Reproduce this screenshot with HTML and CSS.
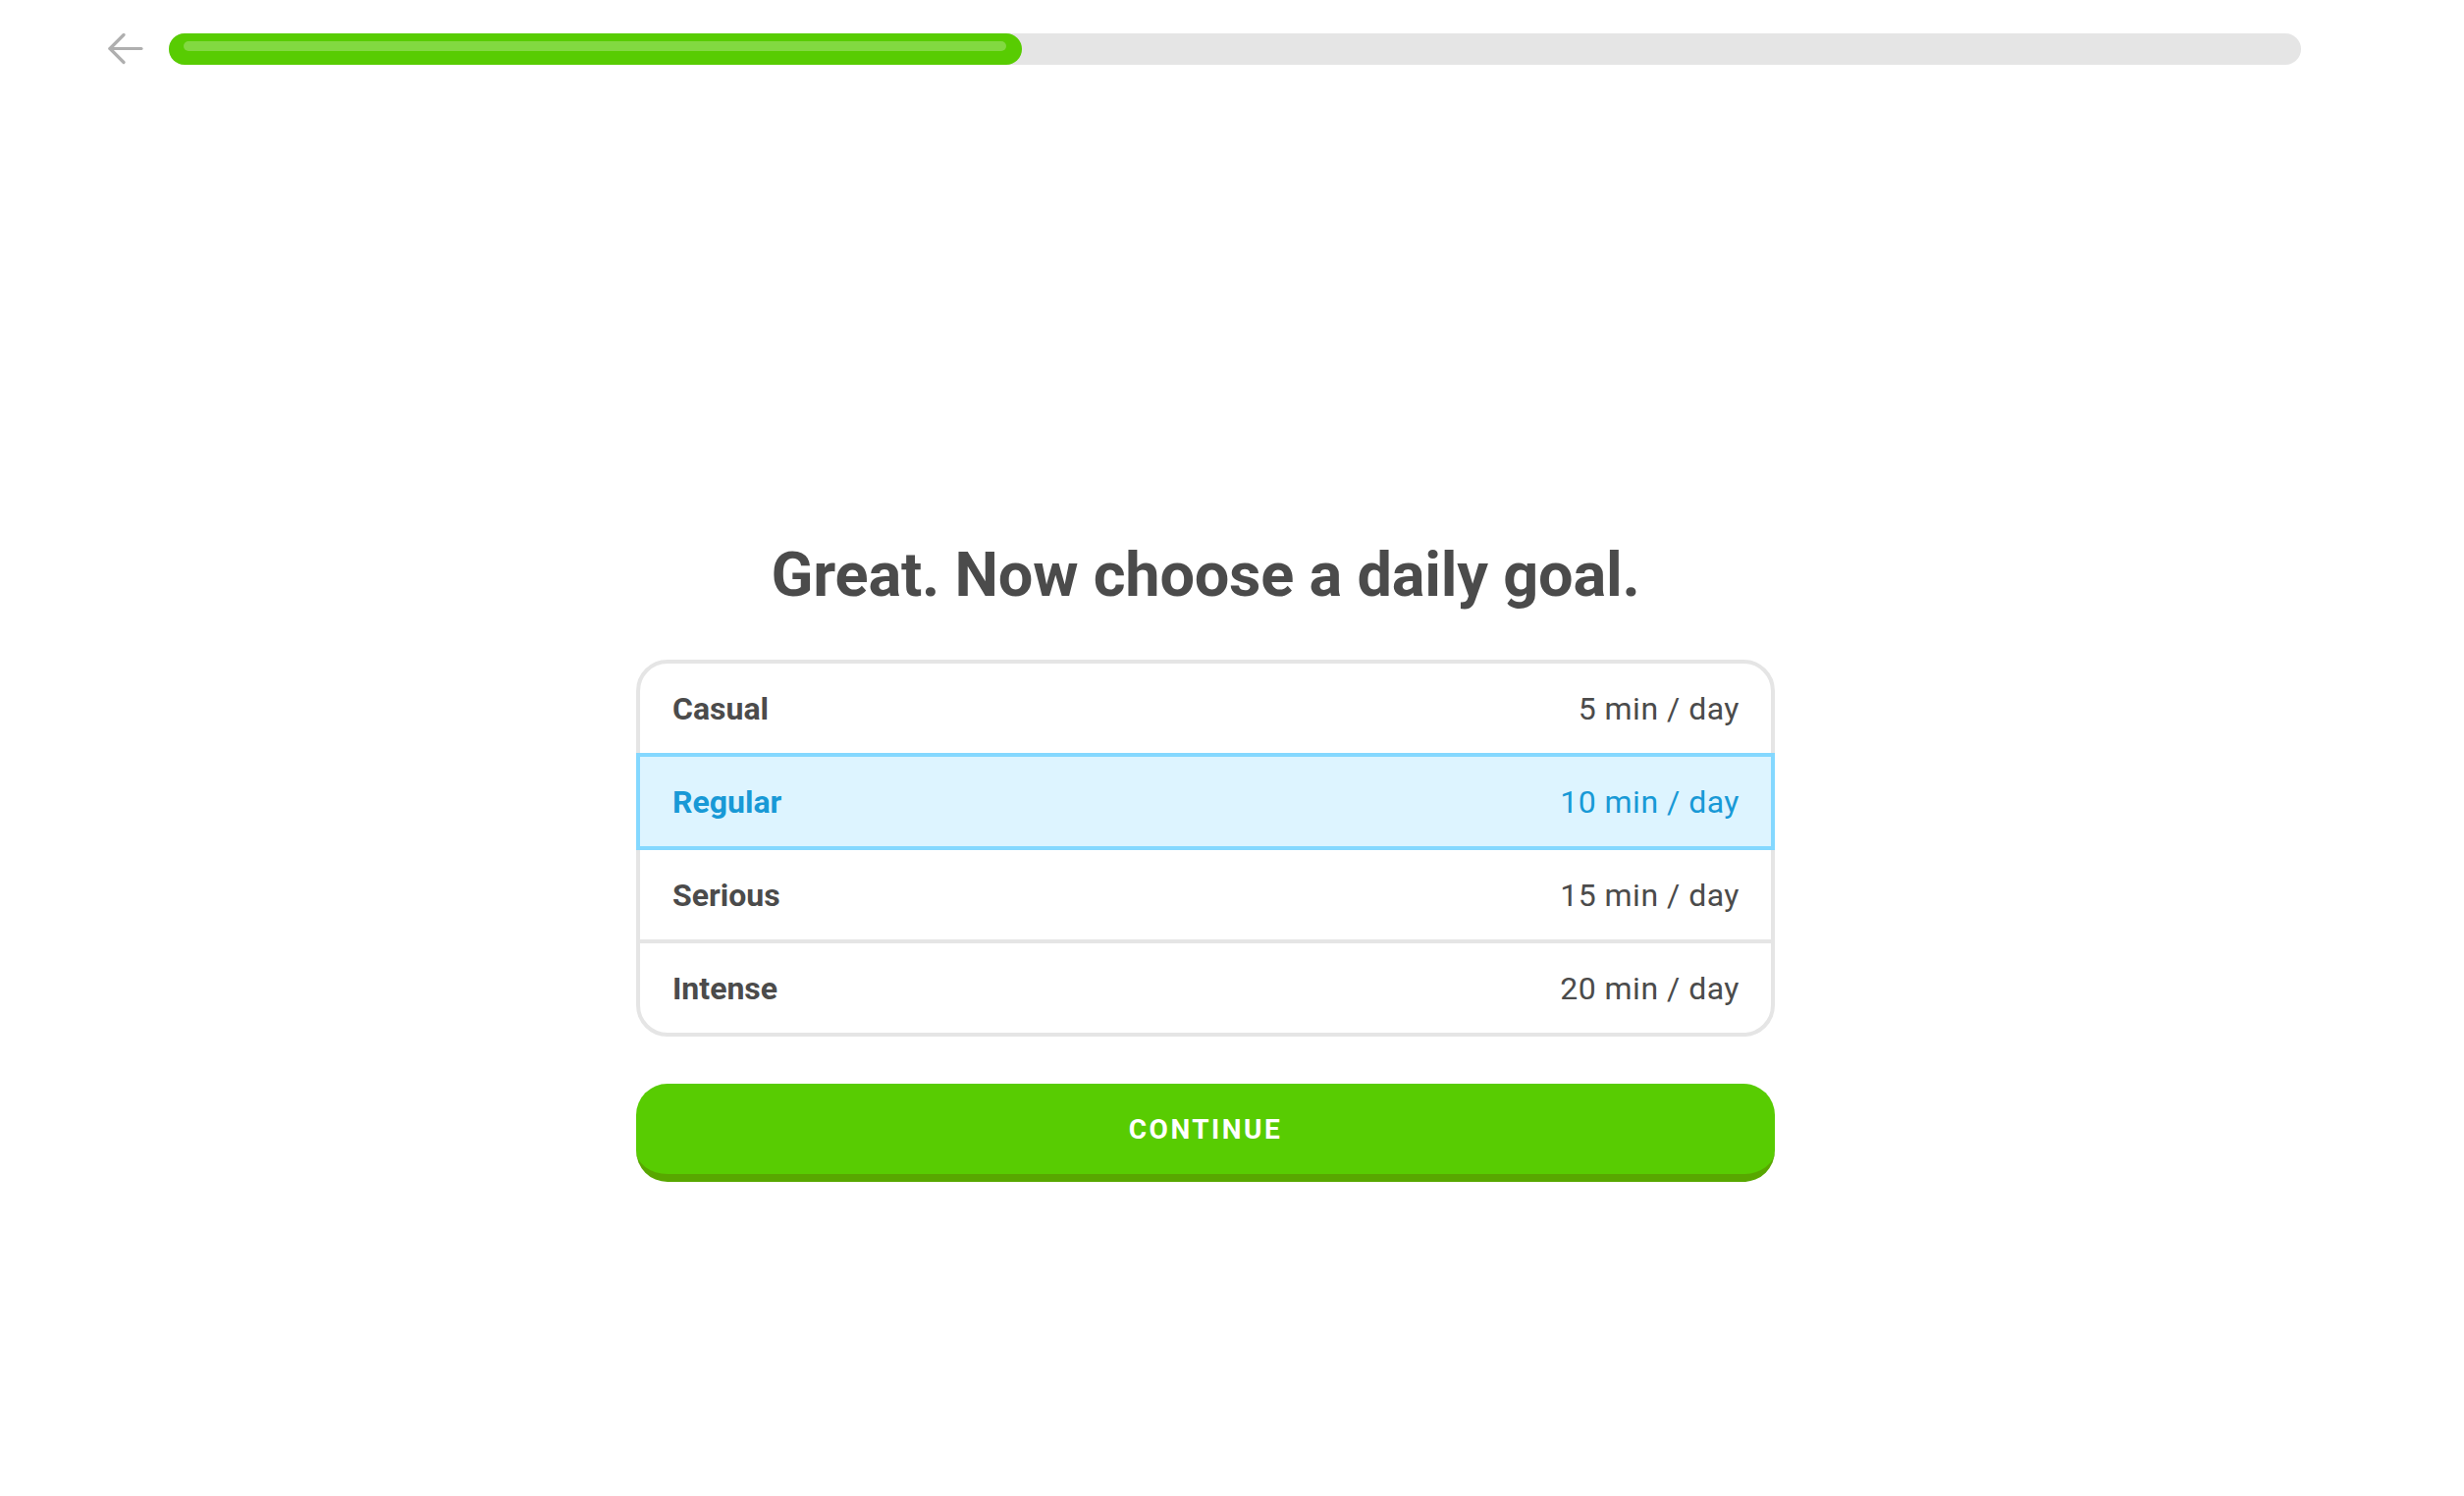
FILE: index.html
```html
<!DOCTYPE html>
<html lang="en">

<head>
    <meta charset="UTF-8">
    <meta name="viewport" content="width=device-width, initial-scale=1.0">
    <title>Daily Goal</title>
    <link rel="stylesheet" href="styles.css">
</head>

<body>
    <div class="topbar">
        <button class="back" aria-label="Back">
            <svg width="36" height="32" viewBox="0 0 36 32" fill="none" stroke="#afafaf" stroke-width="3.2" stroke-linecap="round" stroke-linejoin="round">
                <path d="M2 15.5H34" />
                <path d="M16 1.5L2 15.5L16 29.5" />
            </svg>
        </button>
        <div class="progress">
            <div class="progress-fill">
                <div class="progress-shine"></div>
            </div>
        </div>
    </div>

    <div class="main">
        <div class="goal">
            <h1>Great. Now choose a daily goal.</h1>

            <div class="goal-list">
                <div class="goal-option">
                    <span class="goal-name">Casual</span>
                    <span class="goal-time">5 min / day</span>
                </div>
                <div class="goal-option selected">
                    <span class="goal-name">Regular</span>
                    <span class="goal-time">10 min / day</span>
                </div>
                <div class="goal-option">
                    <span class="goal-name">Serious</span>
                    <span class="goal-time">15 min / day</span>
                </div>
                <div class="goal-option">
                    <span class="goal-name">Intense</span>
                    <span class="goal-time">20 min / day</span>
                </div>
            </div>

            <button class="continue">Continue</button>
        </div>
    </div>
</body>

</html>
```

FILE: styles.css
```css
body {
    font-family: Roboto, "Noto Sans", sans-serif;
    margin: 0;
    background-color: #fff;
    color: #4b4b4b;
}

.topbar {
    display: flex;
    align-items: center;
    gap: 26px;
    padding: 34px 166px 0 110px;
}

.back {
    display: flex;
    padding: 0;
    border: none;
    background: none;
    cursor: pointer;
}

.progress {
    flex: 1;
    height: 32px;
    background-color: #e5e5e5;
    border-radius: 16px;
}

.progress-fill {
    width: 40%;
    height: 100%;
    padding: 8px 16px 0 15px;
    box-sizing: border-box;
    background-color: #58cc02;
    border-radius: 16px;
}

.progress-shine {
    height: 10px;
    border-radius: 5px;
    background-color: rgba(255, 255, 255, 0.25);
}

.main {
    display: flex;
    justify-content: center;
    padding-right: 54px;
    margin-top: 482px;
}

.goal {
    width: 1160px;
}

h1 {
    text-align: center;
    font-size: 63px;
    line-height: 76px;
    font-weight: 700;
    letter-spacing: -0.2px;
    margin: 0 0 48px;
}

.goal-list {
    display: flex;
    flex-direction: column;
}

.goal-option {
    display: flex;
    justify-content: space-between;
    align-items: center;
    height: 99px;
    box-sizing: border-box;
    padding: 0 32px 0 33px;
    margin-top: -4px;
    border: 4px solid #e5e5e5;
    font-size: 32px;
    cursor: pointer;
}

.goal-option:first-child {
    margin-top: 0;
    border-radius: 32px 32px 0 0;
}

.goal-option:last-child {
    border-radius: 0 0 32px 32px;
}

.goal-option.selected {
    position: relative;
    z-index: 1;
    border-color: #84d8ff;
    background-color: #ddf4ff;
    color: #1899d6;
}

.goal-name {
    font-weight: 700;
}

.goal-time {
    letter-spacing: 0.5px;
}

.continue {
    display: block;
    width: 100%;
    height: 100px;
    box-sizing: border-box;
    margin-top: 48px;
    padding: 0;
    border: none;
    border-bottom: 8px solid #58a700;
    border-radius: 32px;
    background-color: #58cc02;
    color: #fff;
    font-family: inherit;
    font-size: 28px;
    font-weight: 700;
    letter-spacing: 2.5px;
    text-transform: uppercase;
    cursor: pointer;
}
```
